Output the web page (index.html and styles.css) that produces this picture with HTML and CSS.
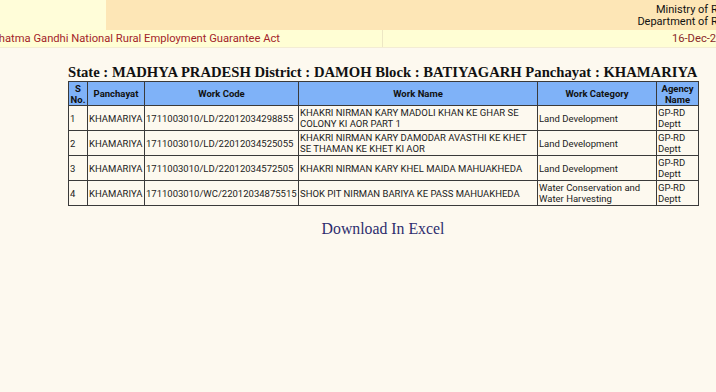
FILE: index.html
```html
<!DOCTYPE html>
<html>
<head>
<meta charset="utf-8">
<link rel="stylesheet" href="styles.css">
</head>
<body>
<div class="page">
  <header class="masthead">
    <div class="topband">
      <div class="logo-cell"></div>
      <div class="ministry">
        <div>Ministry of Rural Development</div>
        <div>Department of Rural Development</div>
      </div>
    </div>
    <div class="actbar">
      <div class="act">Mahatma Gandhi National Rural Employment Guarantee Act</div>
      <div class="date">16-Dec-2024</div>
    </div>
  </header>
  <main class="content">
    <h1 class="title">State : MADHYA PRADESH District : DAMOH Block : BATIYAGARH Panchayat : KHAMARIYA</h1>
    <table class="works">
      <thead>
        <tr>
          <th class="c-sno">S No.</th>
          <th class="c-pan">Panchayat</th>
          <th class="c-code">Work Code</th>
          <th class="c-name">Work Name</th>
          <th class="c-cat">Work Category</th>
          <th class="c-ag">Agency Name</th>
        </tr>
      </thead>
      <tbody>
        <tr>
          <td>1</td><td>KHAMARIYA</td><td>1711003010/LD/22012034298855</td>
          <td>KHAKRI NIRMAN KARY MADOLI KHAN KE GHAR SE COLONY KI AOR PART 1</td>
          <td>Land Development</td><td>GP-RD Deptt</td>
        </tr>
        <tr>
          <td>2</td><td>KHAMARIYA</td><td>1711003010/LD/22012034525055</td>
          <td>KHAKRI NIRMAN KARY DAMODAR AVASTHI KE KHET SE THAMAN KE KHET KI AOR</td>
          <td>Land Development</td><td>GP-RD Deptt</td>
        </tr>
        <tr>
          <td>3</td><td>KHAMARIYA</td><td>1711003010/LD/22012034572505</td>
          <td>KHAKRI NIRMAN KARY KHEL MAIDA MAHUAKHEDA</td>
          <td>Land Development</td><td>GP-RD Deptt</td>
        </tr>
        <tr>
          <td>4</td><td>KHAMARIYA</td><td>1711003010/WC/22012034875515</td>
          <td>SHOK PIT NIRMAN BARIYA KE PASS MAHUAKHEDA</td>
          <td>Water Conservation and Water Harvesting</td><td>GP-RD Deptt</td>
        </tr>
      </tbody>
    </table>
    <p class="download"><a class="dl-link">Download In Excel</a></p>
  </main>
</div>
</body>
</html>
```
FILE: styles.css
```css
html, body {
  margin: 0;
  padding: 0;
  background: #fdf9ef;
  overflow: hidden;
}
.page {
  width: 716px;
  height: 392px;
  overflow: hidden;
  background: #fdf9ef;
}
.masthead {
  margin: 0 -87px 0 -17px;
  font-family: Roboto, "Liberation Sans", sans-serif;
}
.topband {
  display: flex;
  height: 30px;
  background: #fde6b6;
}
.logo-cell {
  width: 123px;
  background: #fffdd9;
}
.ministry {
  flex: 1;
  text-align: right;
  font-size: 11px;
  line-height: 12px;
  color: #111;
  padding-top: 4px;
}
.actbar {
  display: flex;
  height: 17px;
  background: #fffed4;
  border-bottom: 1px solid #f3ecd4;
  font-size: 11.2px;
  line-height: 17px;
}
.act {
  width: 399px;
  border-right: 1px solid #ede7c4;
  color: #a3252a;
  white-space: nowrap;
}
.date {
  flex: 1;
  text-align: right;
  color: #8a2a2a;
  padding-right: 68px;
}
.content {
  padding: 16px 0 0 68px;
}
.title {
  margin: 0;
  font-family: "Liberation Serif", serif;
  font-weight: bold;
  font-size: 14.65px;
  line-height: 17px;
  color: #111;
  white-space: nowrap;
}
.works {
  border-collapse: collapse;
  font-family: Roboto, "Liberation Sans", sans-serif;
  font-size: 9.5px;
  color: #222;
  border: 1px solid #3a3a3a;
}
.works th, .works td {
  border: 1px solid #3a3a3a;
  padding: 0 1px;
  line-height: 11px;
  text-align: left;
}
.works th {
  background: #7fb2f8;
  font-weight: bold;
  text-align: center;
  height: 23px;
  color: #111;
}
.works td {
  height: 24px;
}
.c-sno { width: 16px; }
.c-pan { width: 54px; }
.c-code { width: 151px; }
.c-name { width: 236px; }
.c-cat { width: 116px; }
.c-ag { width: 39px; }
.download {
  margin: 14px 0 0 0;
  width: 630px;
  text-align: center;
  font-family: "Liberation Serif", serif;
  font-size: 15.8px;
}
.dl-link {
  color: #2d2d6e;
}
```
